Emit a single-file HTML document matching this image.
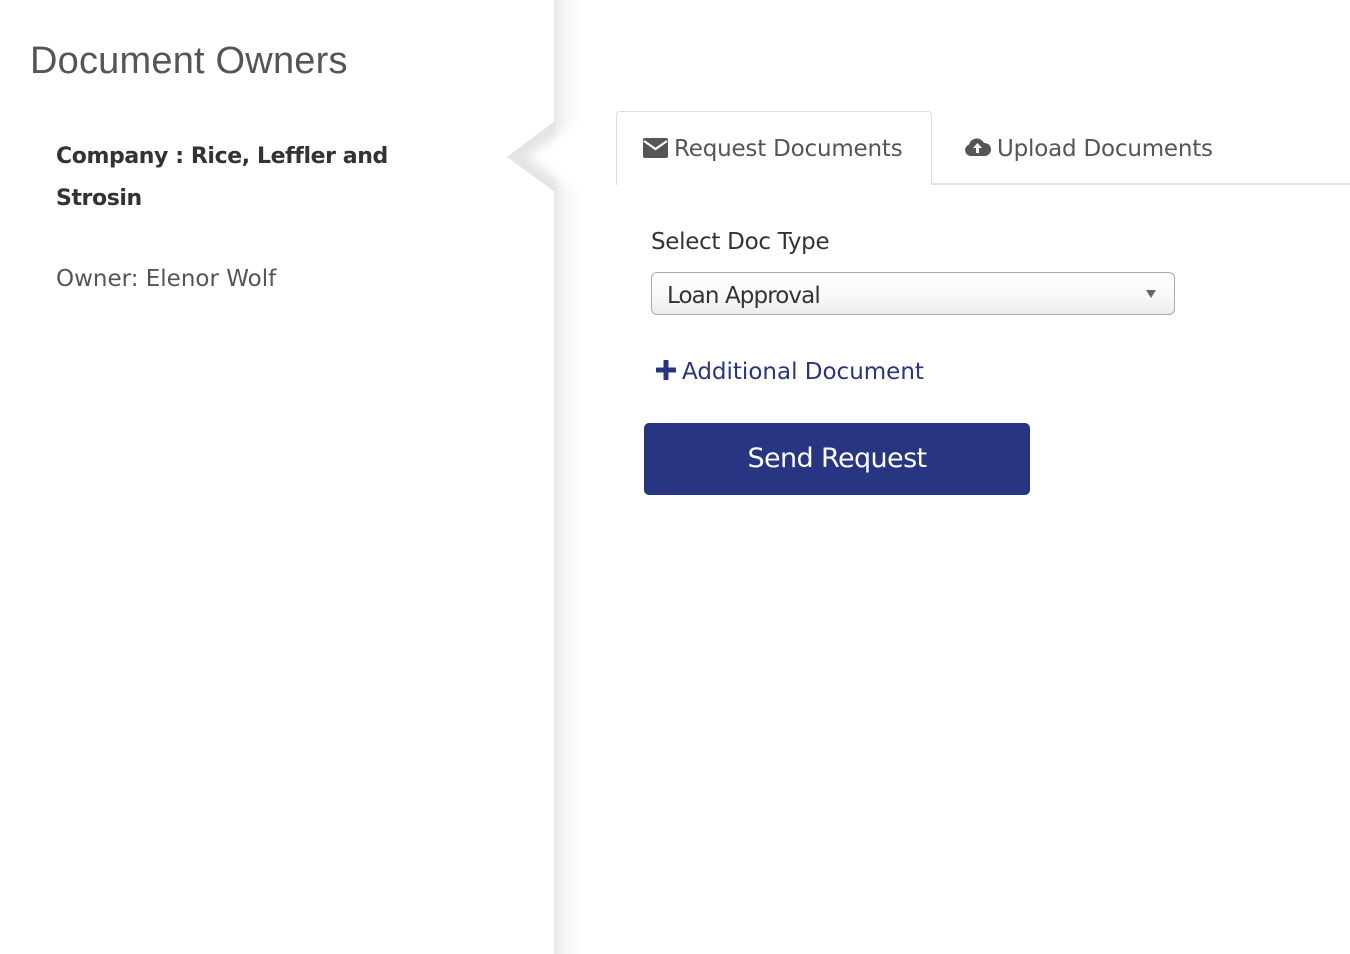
<!DOCTYPE html>
<html><head><meta charset="utf-8"><style>
html,body{margin:0;padding:0;width:1350px;height:954px;background:#fff;overflow:hidden;font-family:"Liberation Sans","DejaVu Sans",sans-serif;position:relative}
.left{position:absolute;left:0;top:0;width:555px;height:954px;background:#fff}
.shadow{position:absolute;left:554px;top:0;width:28px;height:954px;background:linear-gradient(to right,#e6e6e6,#f6f6f6 40%,#fff)}
.title{position:absolute;left:30px;top:40px;font-size:38px;color:#555;font-weight:300;letter-spacing:0.2px}
.comp{position:absolute;left:56px;top:136px;font-size:22px;font-weight:bold;color:#333;line-height:42px;font-family:"DejaVu Sans","Liberation Sans",sans-serif;letter-spacing:-0.4px}
.owner{position:absolute;left:56px;top:266px;font-size:23px;color:#555;font-family:"DejaVu Sans",sans-serif;letter-spacing:0px}
.tab{position:absolute;font-family:"DejaVu Sans",sans-serif;font-size:23px;color:#555;letter-spacing:-0.2px}
.t1{left:616px;top:111px;width:314px;height:73px;border:1px solid #ddd;border-bottom:none;border-radius:4px 4px 0 0;background:#fff}
.line{position:absolute;left:931px;top:183px;width:419px;height:2px;background:#e2e2e2}
.lbl{position:absolute;left:651px;top:229px;font-size:23px;color:#333;font-family:"DejaVu Sans",sans-serif;letter-spacing:-0.3px}
.sel{position:absolute;left:651px;top:272px;width:524px;height:43px;border:1px solid #aaa;border-radius:6px;background:linear-gradient(#fff,#fafafa 50%,#ececec);box-sizing:border-box}
.sel span{position:absolute;left:15px;top:10px;font-size:23px;color:#333;font-family:"DejaVu Sans",sans-serif;letter-spacing:-0.9px}
.sel i{position:absolute;right:18px;top:17px;border-left:5px solid transparent;border-right:5px solid transparent;border-top:8px solid #666}
.add{position:absolute;left:656px;top:359px;font-size:23px;color:#283583;font-family:"DejaVu Sans",sans-serif;letter-spacing:0px}
.btn{position:absolute;left:644px;top:423px;width:386px;height:72px;background:#283583;border-radius:5px;color:#fff;font-size:27px;text-align:center;line-height:72px;font-family:"DejaVu Sans",sans-serif;letter-spacing:-0.6px}
</style></head><body>
<div class="left"></div>
<div class="shadow"></div>
<svg style="position:absolute;left:495px;top:105px" width="100" height="105">
<defs><filter id="f" x="-50%" y="-50%" width="200%" height="200%"><feGaussianBlur stdDeviation="5"/></filter></defs>
<polygon points="12,52 60,16 60,87" fill="#fff"/>
<polygon points="12,52 60,16 60,87" fill="#e4e4e4"/>
<polygon points="32,52 76,20 100,20 100,84 76,84" fill="#fff" filter="url(#f)"/>
</svg>
<div class="title">Document Owners</div>
<div class="comp">Company : Rice, Leffler and<br>Strosin</div>
<div class="owner">Owner: Elenor Wolf</div>
<div class="line"></div>
<div class="tab t1"></div>
<div class="tab" style="left:643px;top:136px">
<svg width="25" height="20" viewBox="0 0 25 20" style="vertical-align:-2px;margin-right:6px"><rect x="0" y="0" width="25" height="20" rx="2" fill="#555"/><path d="M1 3 L12.5 11 L24 3" stroke="#fff" stroke-width="2.2" fill="none"/></svg>Request Documents</div>
<div class="tab" style="left:964px;top:136px">
<svg width="27" height="20" viewBox="0 0 27 20" style="vertical-align:-1px;margin-right:6px"><path d="M6 19 A6 6 0 0 1 5 7.5 A8 8 0 0 1 20 6 A6.5 6.5 0 0 1 21 19 Z" fill="#555"/><path d="M13.5 6 L18 11 H15 V16 H12 V11 H9 Z" fill="#fff"/></svg>Upload Documents</div>
<div class="lbl">Select Doc Type</div>
<div class="sel"><span>Loan Approval</span><i></i></div>
<div class="add"><svg width="20" height="20" viewBox="0 0 20 20" style="vertical-align:-1px;margin-right:6px"><path d="M10 1 V19 M1 10 H19" stroke="#283583" stroke-width="5" stroke-linecap="round"/></svg>Additional Document</div>
<div class="btn">Send Request</div>
</body></html>
